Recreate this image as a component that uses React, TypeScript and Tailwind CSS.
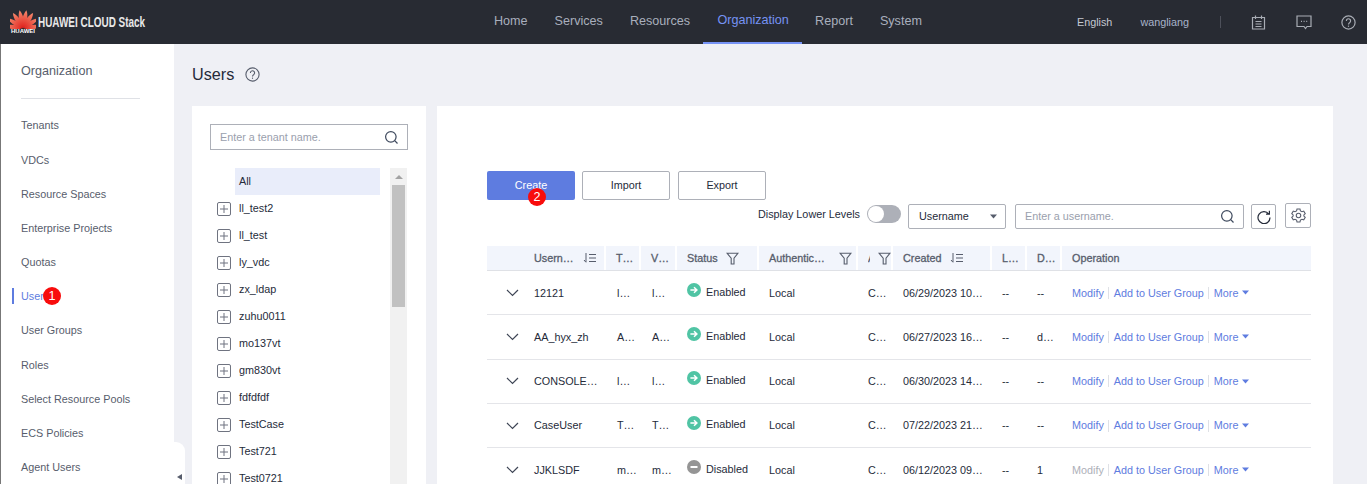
import { FunctionComponent } from "react";

type UserRow = {
  name: string;
  tenant: string;
  vdc: string;
  enabled: boolean;
  created: string;
  lastCol: string;
  modifyOff?: boolean;
};

const navItems = ["Home", "Services", "Resources", "Organization", "Report", "System"];
const sideItems = [
  "Tenants",
  "VDCs",
  "Resource Spaces",
  "Enterprise Projects",
  "Quotas",
  "Users",
  "User Groups",
  "Roles",
  "Select Resource Pools",
  "ECS Policies",
  "Agent Users",
];
const treeItems = [
  "ll_test2",
  "ll_test",
  "ly_vdc",
  "zx_ldap",
  "zuhu0011",
  "mo137vt",
  "gm830vt",
  "fdfdfdf",
  "TestCase",
  "Test721",
  "Test0721",
];
const users: UserRow[] = [
  { name: "12121", tenant: "l…", vdc: "l…", enabled: true, created: "06/29/2023 10…", lastCol: "--" },
  { name: "AA_hyx_zh", tenant: "A…", vdc: "A…", enabled: true, created: "06/27/2023 16…", lastCol: "d…" },
  { name: "CONSOLE…", tenant: "l…", vdc: "l…", enabled: true, created: "06/30/2023 14…", lastCol: "--" },
  { name: "CaseUser", tenant: "T…", vdc: "T…", enabled: true, created: "07/22/2023 21…", lastCol: "--" },
  { name: "JJKLSDF", tenant: "m…", vdc: "m…", enabled: false, created: "06/12/2023 09…", lastCol: "1", modifyOff: true },
];

const tableCols =
  "grid grid-cols-[37px_82px_35px_36px_82px_99px_35px_99px_35px_35px_1fr]";

const Badge: FunctionComponent<{ n: string; className: string }> = ({ n, className }) => (
  <span
    className={`absolute flex h-[18px] w-[18px] items-center justify-center rounded-full bg-[#f80c0c] text-[12.6px] text-white ${className}`}
  >
    {n}
  </span>
);

const HuaweiLogo = () => (
  <svg width="26" height="20" viewBox="0 0 26 20">
    <defs>
      <linearGradient id="petal" x1="0" y1="0" x2="0" y2="1">
        <stop offset="0" stopColor="#f58a6e" />
        <stop offset="1" stopColor="#e0201c" />
      </linearGradient>
    </defs>
    {[-84, -58, -34, -11, 11, 34, 58, 84].map((a) => (
      <path
        key={a}
        d="M13 19 C10 13 10 6 13 1 C16 6 16 13 13 19 Z"
        fill="url(#petal)"
        transform={`rotate(${a} 13 19)`}
      />
    ))}
  </svg>
);

const SortIcon = () => (
  <svg width="14" height="12" viewBox="0 0 14 12" fill="none" stroke="#575d6c" strokeWidth="1">
    <path d="M3 1v9M1 8l2 2.4M6 2.5h7M6 6h7M6 9.5h7" />
  </svg>
);

const FilterIcon = () => (
  <svg width="13" height="13" viewBox="0 0 13 13" fill="none" stroke="#575d6c" strokeWidth="1.1">
    <path d="M1 1.2h11L8 6.2v5.8H5.2V6.2L1 1.2Z" />
  </svg>
);

const SearchIcon = () => (
  <svg width="15" height="15" viewBox="0 0 16 16" fill="none" stroke="#3f4a5e" strokeWidth="1.3">
    <circle cx="7.3" cy="7.3" r="5.6" />
    <path d="M11.4 11.4l3 3" />
  </svg>
);

const Caret = () => (
  <svg width="7" height="5" viewBox="0 0 7 5" fill="#5e7ce0">
    <path d="M0 .5h7L3.5 4.5Z" />
  </svg>
);

const HeadCell: FunctionComponent<{
  label: string;
  icon?: "sort" | "filter";
  iconGap?: string;
  labelClass?: string;
  last?: boolean;
}> = ({ label, icon, iconGap, labelClass, last }) => (
  <div className={`flex items-center pl-[10px] text-[#575d6c] ${last ? "" : "border-r-2 border-white"}`}>
    <span className={`whitespace-nowrap [-webkit-text-stroke:0.3px_#575d6c] ${labelClass ?? ""}`}>{label}</span>
    {icon && (
      <span className={iconGap}>
        {icon === "sort" ? <SortIcon /> : <FilterIcon />}
      </span>
    )}
  </div>
);

const Row: FunctionComponent<{ user: UserRow }> = ({ user }) => (
  <div className={`${tableCols} h-[44.3px] items-center border-b border-[#e4e5e9] text-[#252b3a]`}>
    <div className="flex justify-end pr-[5px]">
      <svg width="13" height="8" viewBox="0 0 13 8" fill="none" stroke="#3f4656" strokeWidth="1.2">
        <path d="M1 1l5.5 5.5L12 1" />
      </svg>
    </div>
    <div className="pl-[10px] whitespace-nowrap">{user.name}</div>
    <div className="pl-[11px]">{user.tenant}</div>
    <div className="pl-[11px]">{user.vdc}</div>
    <div className="flex items-center gap-[5px] pl-[10px] -translate-y-[1px]">
      {user.enabled ? (
        <svg width="14" height="14" viewBox="0 0 14 14" className="-translate-y-[2px]">
          <circle cx="7" cy="7" r="7" fill="#50c4a4" />
          <path d="M3.4 7h6.4M7 4.2 9.9 7 7 9.8" fill="none" stroke="#fff" strokeWidth="1.5" />
        </svg>
      ) : (
        <svg width="14" height="14" viewBox="0 0 14 14" className="-translate-y-[2px]">
          <circle cx="7" cy="7" r="7" fill="#959595" />
          <path d="M3.5 7h7" stroke="#fff" strokeWidth="2" />
        </svg>
      )}
      <span>{user.enabled ? "Enabled" : "Disabled"}</span>
    </div>
    <div className="pl-[10px]">Local</div>
    <div className="pl-[10px]">C…</div>
    <div className="pl-[10px] whitespace-nowrap">{user.created}</div>
    <div className="pl-[10px]">--</div>
    <div className="pl-[10px]">{user.lastCol}</div>
    <div className="flex items-center pl-[10px] text-[#5e7ce0]">
      <span className={user.modifyOff ? "text-[#adb0b8]" : ""}>Modify</span>
      <span className="ml-[4px] mr-[5px] h-[12px] w-px bg-[#dfe1e6]" />
      <span>Add to User Group</span>
      <span className="ml-[4px] mr-[5px] h-[12px] w-px bg-[#dfe1e6]" />
      <span>More</span>
      <span className="ml-[4px]">
        <Caret />
      </span>
    </div>
  </div>
);

const App: FunctionComponent = () => {
  return (
    <div className="flex h-[484px] w-full flex-col overflow-hidden bg-[#eff0f5] font-['Liberation_Sans',Arial,sans-serif] text-[10.8px]">
      <header className="flex h-[44px] shrink-0 items-center bg-[#282b33]">
        <div className="relative ml-[10px] flex w-[484px] shrink-0 items-center">
          <div className="flex w-[26px] flex-col items-center">
            <HuaweiLogo />
            <span className="mt-[-1px] text-[6px] leading-[7px] font-bold text-white">HUAWEI</span>
          </div>
          <span className="ml-[2px] inline-block origin-left scale-x-[0.71] whitespace-nowrap text-[14px] font-bold text-[#e8e8e8]">
            HUAWEI CLOUD Stack
          </span>
        </div>
        <nav className="flex h-full items-center text-[12.6px]">
          {navItems.map((item) =>
            item === "Organization" ? (
              <a
                key={item}
                className="flex h-full w-[99px] items-center justify-center border-b-2 border-[#7693f5] pb-[2px] pl-[2px] text-[#7693f5]"
              >
                {item}
              </a>
            ) : (
              <a
                key={item}
                className={`ml-[13.5px] flex h-full items-center pb-[2px] text-[#a9afbd] first:ml-0 ${
                  item === "Resources" ? "mr-[12.5px]" : "mr-[13.5px]"
                }`}
              >
                {item}
              </a>
            )
          )}
        </nav>
        <div className="ml-auto flex items-center text-[10.8px] text-[#c4c8d2]">
          <span>English</span>
          <span className="ml-[28px] text-[#a9b4cb]">wangliang</span>
          <span className="ml-[31px] h-[12px] w-px bg-[#4d505a]" />
          <svg className="ml-[30px]" width="15" height="15" viewBox="0 0 15 15" fill="none" stroke="#a9adb5" strokeWidth="1.2">
            <path d="M1.5 2.5h12v11.5h-12zM4.5 .5v3.5M10.5 .5v3.5M4.5 6.5h6M4.5 9h6M4.5 11.5h6" />
          </svg>
          <svg className="ml-[30px]" width="16" height="15" viewBox="0 0 16 15" fill="none" stroke="#a9adb5" strokeWidth="1.2">
            <path d="M1 1h14v10.5h-4l-1.5 2-1.5-2H1z" />
            <path d="M5 6.3h1M7.6 6.3h1M10.2 6.3h1" />
          </svg>
          <svg className="ml-[29px] mr-[11px]" width="15" height="15" viewBox="0 0 15 15" fill="none" stroke="#a9adb5" strokeWidth="1.2">
            <circle cx="7.5" cy="7.5" r="6.6" />
            <path d="M5.4 5.9a2.1 2.1 0 1 1 3.4 1.6c-.8.6-1.3 1-1.3 2" />
            <path d="M7.5 10.6v1.2" />
          </svg>
        </div>
      </header>

      <div className="flex min-h-0 flex-1">
        <aside className="relative w-[174px] shrink-0 border-l border-[#777] bg-white">
          <div className="pl-[20px] pt-[20px] text-[12.6px] leading-[15px] text-[#575d6c]">Organization</div>
          <div className="ml-[20px] mt-[19px] h-px w-[119px] bg-[#dfe1e6]" />
          <ul className="mt-[9.35px]">
            {sideItems.map((item) => (
              <li key={item} className="relative flex h-[34.2px] items-center pl-[20px] text-[#575d6c]">
                {item === "Users" ? (
                  <>
                    <span className="absolute left-[11px] top-[9px] h-[16px] w-[2px] bg-[#5e7ce0]" />
                    <span className="text-[#5e7ce0]">{item}</span>
                    <Badge n="1" className="left-[42px] top-[8px]" />
                  </>
                ) : (
                  item
                )}
              </li>
            ))}
          </ul>
          <div className="absolute bottom-0 right-[-11px] flex h-[42px] w-[11px] items-end justify-center rounded-tr-[9px] bg-white pb-[4px]">
            <svg width="5" height="6" viewBox="0 0 5 6" fill="#575d6c">
              <path d="M5 0v6L0 3Z" />
            </svg>
          </div>
        </aside>

        <main className="min-w-0 flex-1 pl-[18px] pr-[34px]">
          <div className="flex h-[62px] items-center pb-[1px]">
            <h1 className="text-[16.2px] font-normal text-[#252b3a]">Users</h1>
            <svg className="ml-[11px]" width="15" height="15" viewBox="0 0 15 15" fill="none" stroke="#575d6c" strokeWidth="1.1">
              <circle cx="7.5" cy="7.5" r="6.6" />
              <path d="M5.4 5.9a2.1 2.1 0 1 1 3.4 1.6c-.8.6-1.3 1-1.3 2" />
              <path d="M7.5 10.6v1.2" />
            </svg>
          </div>

          <div className="flex gap-[11px]">
            <section className="h-[400px] w-[234px] shrink-0 bg-white pl-[18px] pr-[18px] pt-[18px]">
              <div className="flex h-[26px] items-center justify-between border border-[#adb0b8] pl-[9px] pr-[8px] text-[#9aa0ad]">
                <span>Enter a tenant name.</span>
                <SearchIcon />
              </div>
              <div className="mt-[18px] flex">
                <div className="w-[181px] shrink-0 overflow-hidden">
                  <div className="ml-[25px] flex h-[27px] w-[145px] items-center bg-[#e9edfa] pl-[4px] text-[#252b3a]">All</div>
                  {treeItems.map((name) => (
                    <div key={name} className="flex h-[27px] items-center pl-[7px] text-[#252b3a]">
                      <svg width="14" height="14" viewBox="0 0 14 14" fill="none" stroke="#6f7380" strokeWidth="1">
                        <rect x=".5" y=".5" width="13" height="13" rx="1.5" />
                        <path d="M3 7h8M7 3v8" />
                      </svg>
                      <span className="ml-[8px]">{name}</span>
                    </div>
                  ))}
                </div>
                <div className="ml-[-1px] flex h-[400px] w-[17px] flex-col items-center bg-[#f1f1f1] pt-[7px]">
                  <svg width="8" height="4" viewBox="0 0 8 4" fill="#a3a3a3">
                    <path d="M0 4 4 0l4 4Z" />
                  </svg>
                  <div className="mt-[6px] h-[122px] w-[13px] bg-[#c1c1c1]" />
                </div>
              </div>
            </section>

            <section className="min-w-0 flex-1 bg-white pl-[50px] pr-[22px] pt-[65px]">
              <div className="flex gap-[7px] text-[#252b3a]">
                <button className="relative h-[29px] w-[88px] rounded-[2px] bg-[#5e7ce0] text-white">
                  Create
                  <Badge n="2" className="left-[41px] top-[17px]" />
                </button>
                <button className="h-[29px] w-[88px] rounded-[2px] border border-[#adb0b8]">Import</button>
                <button className="ml-[1px] h-[29px] w-[88px] rounded-[2px] border border-[#adb0b8]">Export</button>
              </div>

              <div className="mt-[3px] flex h-[26px] items-start justify-end text-[#252b3a]">
                <span className="mt-[3px]">Display Lower Levels</span>
                <span className="ml-[7px] mt-[2px] flex h-[18px] w-[34px] items-center rounded-full bg-[#adb0b8] pl-[1px]">
                  <span className="h-[16px] w-[16px] rounded-full bg-white" />
                </span>
                <div className="ml-[7px] mt-[1px] flex h-[25px] w-[98px] items-center justify-between rounded-[2px] border border-[#adb0b8] pb-[1px] pl-[10px] pr-[8px]">
                  <span>Username</span>
                  <svg width="7" height="5" viewBox="0 0 7 5" fill="#575d6c">
                    <path d="M0 .5h7L3.5 4.5Z" />
                  </svg>
                </div>
                <div className="ml-[9px] mt-[1px] flex h-[25px] w-[229px] items-center justify-between rounded-[2px] border border-[#adb0b8] pb-[1px] pl-[9px] pr-[8px] text-[#9aa0ad]">
                  <span>Enter a username.</span>
                  <SearchIcon />
                </div>
                <button className="ml-[7px] mt-[1px] flex h-[25px] w-[25px] items-center justify-center rounded-[2px] border border-[#adb0b8]">
                  <svg width="14" height="14" viewBox="0 0 14 14" fill="none" stroke="#252b3a" strokeWidth="1.2">
                    <path d="M11.8 4A6 6 0 1 0 13 7.5M12.4 .8V4.2H9" />
                  </svg>
                </button>
                <button className="ml-[9px] flex h-[25px] w-[26px] items-center justify-center rounded-[2px] border border-[#adb0b8]">
                  <svg width="15" height="15" viewBox="0 0 14 14" fill="none" stroke="#575d6c" strokeWidth="1">
                    <path d="M5.6 1h2.8l.4 1.7 1.5.8 1.6-.6 1.4 2.4-1.3 1.2v1l1.3 1.2-1.4 2.4-1.6-.6-1.5.8L8.4 13H5.6l-.4-1.7-1.5-.8-1.6.6L.7 8.7 2 7.5v-1L.7 5.3l1.4-2.4 1.6.6 1.5-.8Z" />
                    <circle cx="7" cy="7" r="2.1" />
                  </svg>
                </button>
              </div>

              <div className="mt-[17px]">
                <div className={`${tableCols} h-[25px] border-b border-[#dfe1e6] bg-[#f2f5fc]`}>
                  <div />
                  <HeadCell label="Usern…" icon="sort" iconGap="ml-[9px]" />
                  <HeadCell label="T…" />
                  <HeadCell label="V…" />
                  <HeadCell label="Status" icon="filter" iconGap="ml-[8px]" />
                  <HeadCell label="Authentic…" icon="filter" iconGap="ml-[14px]" />
                  <HeadCell label="A" labelClass="w-[3px] overflow-hidden" icon="filter" iconGap="ml-[8px]" />
                  <HeadCell label="Created" icon="sort" iconGap="ml-[9px]" />
                  <HeadCell label="L…" />
                  <HeadCell label="D…" />
                  <HeadCell label="Operation" last />
                </div>
                {users.map((user) => (
                  <Row key={user.name} user={user} />
                ))}
              </div>
            </section>
          </div>
        </main>
      </div>
    </div>
  );
};

export default App;
